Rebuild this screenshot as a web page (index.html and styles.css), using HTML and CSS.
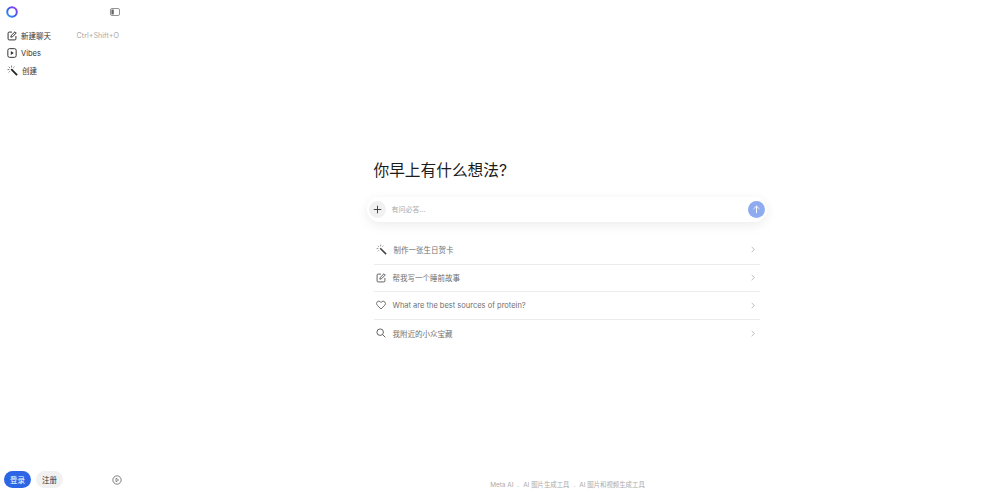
FILE: index.html
```html
<!DOCTYPE html>
<html lang="zh">
<head>
<meta charset="utf-8">
<title>Meta AI</title>
<link rel="stylesheet" href="styles.css">
</head>
<body>
<div class="app">
  <aside class="sidebar">
    <div class="side-top">
      <svg class="logo" viewBox="0 0 12 12" width="12" height="12"><defs><linearGradient id="lg" x1="0" y1="1" x2="1" y2="0"><stop offset="0" stop-color="#2aa0ee"/><stop offset=".5" stop-color="#3a55ee"/><stop offset="1" stop-color="#a03ff0"/></linearGradient></defs><circle cx="6" cy="6" r="4.8" fill="none" stroke="url(#lg)" stroke-width="2"/></svg>
      <svg class="collapse" viewBox="0 0 10 8" width="10" height="8"><rect x=".5" y=".5" width="9" height="7" rx="1.4" fill="none" stroke="#777" stroke-width=".8"/><rect x="1.4" y="1.4" width="2.4" height="5.2" rx=".5" fill="#666"/></svg>
    </div>
    <nav class="nav">
      <div class="nav-item">
        <svg viewBox="0 0 12 12" width="10" height="10"><path d="M6 1.3H2.6A1.3 1.3 0 0 0 1.3 2.6v6.8a1.3 1.3 0 0 0 1.3 1.3h6.8a1.3 1.3 0 0 0 1.3-1.3V6" fill="none" stroke="#333" stroke-width="1.2"/><path d="M4.6 7.4 5 5.4 9.6.9l1.5 1.5L6.6 7Z" fill="none" stroke="#333" stroke-width="1.2" stroke-linejoin="round"/></svg>
        <span class="nav-label">新建聊天</span><span class="shortcut">Ctrl+Shift+O</span>
      </div>
      <div class="nav-item">
        <svg viewBox="0 0 12 12" width="10" height="10"><rect x="1" y=".8" width="10" height="10.4" rx="2" fill="none" stroke="#333" stroke-width="1.2"/><path d="M4.6 3.6 8.2 6 4.6 8.4Z" fill="#333"/></svg>
        <span class="nav-label">Vibes</span>
      </div>
      <div class="nav-item">
        <svg viewBox="0 0 12 12" width="11" height="11"><path d="M4.6 4.6 11 11" stroke="#222" stroke-width="2" fill="none"/><path d="M5 .6v2M.6 5h2M1.9 1.9l1.3 1.3M8.1 1.9 6.9 3.1M1.9 8.1l1.3-1.3" stroke="#444" stroke-width=".8" fill="none"/></svg>
        <span class="nav-label">创建</span>
      </div>
    </nav>
    <div class="side-bottom">
      <button class="btn btn-login">登录</button>
      <button class="btn btn-signup">注册</button>
      <svg class="gear" viewBox="0 0 12 12" width="10" height="10"><circle cx="6" cy="6" r="5" fill="none" stroke="#555" stroke-width=".9"/><path d="M4.8 3.8 8 6 4.8 8.2Z" fill="none" stroke="#555" stroke-width=".8"/></svg>
    </div>
  </aside>
  <main class="main">
    <div class="center">
      <h1 class="title">你早上有什么想法?</h1>
      <div class="composer">
        <span class="plus"><svg viewBox="0 0 10 10" width="9" height="9"><path d="M5 .8v8.4M.8 5h8.4" stroke="#333" stroke-width="1"/></svg></span>
        <span class="placeholder">有问必答...</span>
        <span class="send"><svg viewBox="0 0 10 10" width="9" height="9"><path d="M5 9V1.2M1.8 4.3 5 1.2l3.2 3.1" stroke="#fff" stroke-width="1" fill="none"/></svg></span>
      </div>
      <ul class="suggestions">
        <li class="suggestion">
          <svg viewBox="0 0 12 12" width="11" height="11"><path d="M4.6 4.6 11 11" stroke="#444" stroke-width="1.7" fill="none"/><path d="M5 .6v2M.6 5h2M1.9 1.9l1.3 1.3M8.1 1.9 6.9 3.1M1.9 8.1l1.3-1.3" stroke="#666" stroke-width=".7" fill="none"/></svg>
          <span class="s-text">制作一张生日贺卡</span>
          <svg class="chev" viewBox="0 0 6 10" width="4" height="7"><path d="M1 1l4 4-4 4" stroke="#999" stroke-width="1" fill="none"/></svg>
        </li>
        <li class="suggestion">
          <svg viewBox="0 0 12 12" width="10" height="10"><path d="M6 1.3H2.6A1.3 1.3 0 0 0 1.3 2.6v6.8a1.3 1.3 0 0 0 1.3 1.3h6.8a1.3 1.3 0 0 0 1.3-1.3V6" fill="none" stroke="#444" stroke-width="1"/><path d="M4.6 7.4 5 5.4 9.6.9l1.5 1.5L6.6 7Z" fill="none" stroke="#444" stroke-width="1" stroke-linejoin="round"/></svg>
          <span class="s-text">帮我写一个睡前故事</span>
          <svg class="chev" viewBox="0 0 6 10" width="4" height="7"><path d="M1 1l4 4-4 4" stroke="#999" stroke-width="1" fill="none"/></svg>
        </li>
        <li class="suggestion">
          <svg viewBox="0 0 12 12" width="10" height="10"><path d="M6 10.8 1.6 6.4A2.9 2.9 0 0 1 1.4 2.3a2.9 2.9 0 0 1 4.1 0l.5.6.5-.6a2.9 2.9 0 0 1 4.1 0 2.9 2.9 0 0 1-.2 4.1Z" fill="none" stroke="#444" stroke-width=".9"/></svg>
          <span class="s-text">What are the best sources of protein?</span>
          <svg class="chev" viewBox="0 0 6 10" width="4" height="7"><path d="M1 1l4 4-4 4" stroke="#999" stroke-width="1" fill="none"/></svg>
        </li>
        <li class="suggestion">
          <svg viewBox="0 0 12 12" width="10" height="10"><circle cx="5" cy="5" r="3.9" fill="none" stroke="#444" stroke-width="1"/><path d="M8 8l3.2 3.2" stroke="#444" stroke-width="1"/></svg>
          <span class="s-text">我附近的小众宝藏</span>
          <svg class="chev" viewBox="0 0 6 10" width="4" height="7"><path d="M1 1l4 4-4 4" stroke="#999" stroke-width="1" fill="none"/></svg>
        </li>
      </ul>
    </div>
    <footer class="footer">
      <span>Meta AI</span><span class="dot">.</span><span>AI 图片生成工具</span><span class="dot">.</span><span>AI 图片和视频生成工具</span>
    </footer>
  </main>
</div>
</body>
</html>
```
FILE: styles.css
```css
* { box-sizing: border-box; }
html, body { margin: 0; height: 100%; background: #fff; }
body { font-family: "Inter", "Noto Sans CJK SC", sans-serif; color: #1c1c1c; overflow: hidden; }
.app { display: flex; height: 494px; }
.sidebar { width: 126px; flex: none; display: flex; flex-direction: column; padding: 6px 0; }
.side-top { display: flex; justify-content: space-between; align-items: center; height: 12px; padding: 0 6px; }
.nav { display: flex; flex-direction: column; margin-top: 9px; }
.nav-item { display: flex; align-items: center; height: 17.6px; padding: 0 7px; gap: 4px; color: #333; }
.nav-item svg { flex: none; }
.nav-label { flex: 1; font-size: 7.5px; }
.shortcut { color: #aaa; font-size: 7.2px; }
.side-bottom { margin-top: auto; display: flex; align-items: center; padding: 0 4px; gap: 5px; }
.btn { border: 0; height: 17px; border-radius: 9px; font: inherit; font-size: 7.5px; padding: 0; width: 27px; }
.btn-login { background: #2d66e5; color: #fff; }
.btn-signup { background: #f1f1f1; color: #333; }
.gear { margin-left: auto; }
.main { flex: 1; position: relative; display: flex; flex-direction: column; align-items: center; }
.center { width: 400px; margin-top: 160px; margin-left: 7px; display: flex; flex-direction: column; }
.title { font-size: 15.7px; line-height: 22px; font-weight: 400; margin: 0 0 15px 7px; color: #1c1c1c; }
.composer { height: 25px; border-radius: 13px; display: flex; align-items: center; padding: 0 2px; background: #fff; box-shadow: 0 3px 12px rgba(0,0,0,.08); }
.plus { width: 17px; height: 17px; border-radius: 50%; background: #f1f1f1; display: flex; align-items: center; justify-content: center; }
.placeholder { flex: 1; font-size: 7px; color: #aaa; margin-left: 6px; padding-bottom: 1px; }
.send { width: 17px; height: 17px; border-radius: 50%; background: #8fabf0; display: flex; align-items: center; justify-content: center; }
.suggestions { list-style: none; margin: 15px 7px 0; padding: 0; }
.suggestion { display: flex; align-items: center; height: 27.7px; padding: 0 5px 1px 2px; border-bottom: 1px solid #ececec; gap: 7px; font-size: 7.5px; color: #707070; }
.suggestion:last-child { border-bottom: 0; }
.suggestion svg { flex: none; }
.s-text { flex: 1; }
.footer { position: absolute; bottom: 5px; left: 0; right: 0; display: flex; justify-content: center; align-items: baseline; gap: 4px; font-size: 6.4px; color: #aaa; padding-left: 9px; }
```
